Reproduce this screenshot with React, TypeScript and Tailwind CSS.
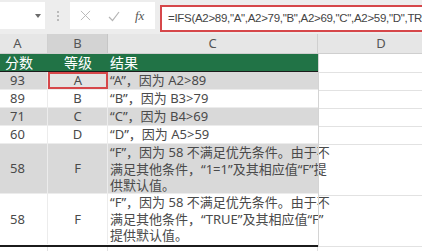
import React from "react";

const font = "font-['Noto_Sans','Noto_Sans_CJK_SC',sans-serif]";

type Row = {
    score: string;
    grade: string;
    lines: string[];
    gray: boolean;
    tall?: boolean;
    selected?: boolean;
};

const rows: Row[] = [
    { score: "93", grade: "A", lines: ["“A”，因为 A2>89"], gray: true, selected: true },
    { score: "89", grade: "B", lines: ["“B”，因为 B3>79"], gray: false },
    { score: "71", grade: "C", lines: ["“C”，因为 B4>69"], gray: true },
    { score: "60", grade: "D", lines: ["“D”，因为 A5>59"], gray: false },
    {
        score: "58",
        grade: "F",
        lines: ["“F”，因为 58 不满足优先条件。由于不", "满足其他条件，“1=1”及其相应值“F”提", "供默认值。"],
        gray: true,
        tall: true,
    },
    {
        score: "58",
        grade: "F",
        lines: ["“F”，因为 58 不满足优先条件。由于不", "满足其他条件，“TRUE”及其相应值“F”", "提供默认值。"],
        gray: false,
        tall: true,
    },
];

function TopBar() {
    return (
        <div className="flex h-[34px] items-start bg-[#ededed] pt-[2px]">
            <div className="relative h-[27px] w-[45px] bg-white">
                <div className="absolute left-[35px] top-[12px] h-0 w-0 border-x-[3px] border-t-[4px] border-x-transparent border-t-[#6b6b6b]" />
            </div>
            <div className="flex h-[27px] w-[25px] flex-col items-center justify-center gap-[2px]">
                <div className="size-[2px] rounded-full bg-[#a8a8a8]" />
                <div className="size-[2px] rounded-full bg-[#a8a8a8]" />
                <div className="size-[2px] rounded-full bg-[#a8a8a8]" />
            </div>
            <div className="flex h-[27px] w-[85px] items-center bg-white">
                <svg className="ml-[10px] size-[11px]" viewBox="0 0 12 12" fill="none" stroke="#b5b5b5" strokeWidth="1">
                    <path d="M1 1 L11 11 M11 1 L1 11" />
                </svg>
                <svg className="ml-[17px] size-[12px]" viewBox="0 0 12 12" fill="none" stroke="#b5b5b5" strokeWidth="1.2">
                    <path d="M1 7 L4.5 10.5 L11 2" />
                </svg>
                <span className="ml-[15px] font-['Liberation_Serif',serif] text-[13px] italic text-[#555]">fx</span>
            </div>
            <div className="ml-[5px] mt-[3px] flex h-[27px] min-w-0 flex-1 items-center overflow-hidden whitespace-nowrap border-2 border-r-0 border-[#d6474a] bg-white pl-[6px] font-['Liberation_Sans',sans-serif] text-[11.5px] tracking-[-0.3px] text-[#444]">
                =IFS(A2&gt;89,"A",A2&gt;79,"B",A2&gt;69,"C",A2&gt;59,"D",TRU
            </div>
        </div>
    );
}

function ColumnHeaders() {
    return (
        <div className="grid h-[20px] grid-cols-[48px_60px_210px_1fr] border-b border-[#cfcfcf] bg-[#e6e6e6] text-[13px] leading-none text-[#555]">
            <div className="flex items-center justify-center border-r border-[#d0d0d0] pr-[12px]">A</div>
            <div className="flex items-center justify-center border-r border-[#c6c6c6] bg-[#d3d3d3]">B</div>
            <div className="flex items-center justify-center border-r border-[#d0d0d0]">C</div>
            <div className="flex items-center justify-center pl-[22px]">D</div>
        </div>
    );
}

export default function App() {
    return (
        <div className={`h-[251px] w-[422px] overflow-hidden bg-white ${font}`}>
            <TopBar />
            <ColumnHeaders />
            <div className="grid grid-cols-[318px_1fr]">
                <div className="border-b-[2px] border-[#1b1b1b]">
                    <div className="grid h-[18px] grid-cols-[48px_60px_210px] border-b border-[#1b1b1b] bg-[#217346] text-[14px] leading-none text-white">
                        <div className="flex items-center pl-[5px]">分数</div>
                        <div className="flex items-center justify-center">等级</div>
                        <div className="flex items-center pl-[2px]">结果</div>
                    </div>
                    {rows.map((r, i) => (
                        <div
                            key={i}
                            className={`grid grid-cols-[48px_60px_210px] text-[13px] leading-none text-[#4a4a4a] ${r.tall ? "h-[50px]" : "h-[18px]"} ${r.gray ? "bg-[#d9d9d9]" : "bg-white"} ${i < rows.length - 1 ? "border-b border-[#ececec]" : ""}`}
                        >
                            <div className="flex items-center border-r border-[#ececec] pl-[10px]">{r.score}</div>
                            <div
                                className={`flex items-center justify-center ${r.selected ? "border-2 border-[#d6474a] bg-[#e3e3e3]" : "border-r border-[#ececec]"}`}
                            >
                                {r.grade}
                            </div>
                            <div className="flex flex-col justify-center whitespace-nowrap pl-[2px] leading-[16.5px]">
                                {r.lines.map((l, j) => (
                                    <div key={j}>{l}</div>
                                ))}
                            </div>
                        </div>
                    ))}
                </div>
                <div className="border-l border-[#d4d4d4]">
                    <div className="h-[19px] border-b border-[#e2e2e2]" />
                    <div className="h-[18px] border-b border-[#e2e2e2]" />
                    <div className="h-[18px] border-b border-[#e2e2e2]" />
                    <div className="h-[18px] border-b border-[#e2e2e2]" />
                    <div className="h-[18px] border-b border-[#e2e2e2]" />
                    <div className="h-[51px] border-b border-[#e2e2e2]" />
                    <div className="h-[51px] border-b border-[#e2e2e2]" />
                </div>
            </div>
            <div className="grid h-[10px] grid-cols-[48px_60px_210px_1fr]">
                <div className="border-r border-[#e2e2e2]" />
                <div className="border-r border-[#e2e2e2]" />
                <div className="border-r border-[#e2e2e2]" />
                <div />
            </div>
        </div>
    );
}
